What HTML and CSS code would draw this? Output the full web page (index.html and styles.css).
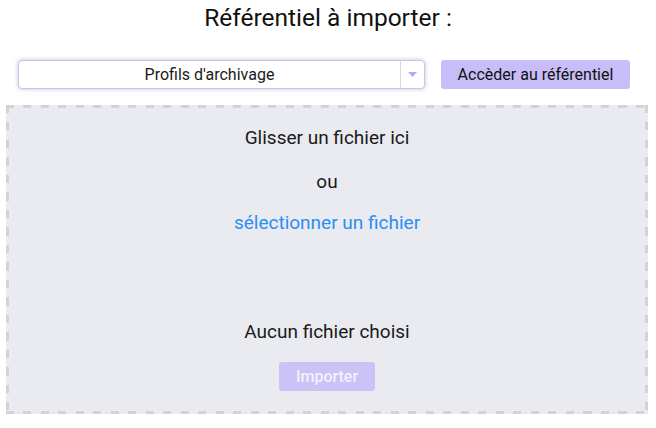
FILE: index.html
```html
<!DOCTYPE html>
<html lang="fr">
<head>
<meta charset="utf-8">
<title>Import</title>
<link rel="stylesheet" href="styles.css">
</head>
<body>
<div class="page">
  <h1 class="title">Référentiel à importer :</h1>
  <div class="toolbar">
    <div class="select">
      <span class="select-value">Profils d'archivage</span>
      <span class="select-arrow"><svg width="9" height="5" viewBox="0 0 9 5"><polygon points="0,0 9,0 4.5,5" fill="#b5aaf2"/></svg></span>
    </div>
    <button class="btn btn-access">Accèder au référentiel</button>
  </div>
  <div class="dropzone">
    <p class="dz-line dz-drag">Glisser un fichier ici</p>
    <p class="dz-line dz-or">ou</p>
    <p class="dz-line dz-pick">sélectionner un fichier</p>
    <p class="dz-line dz-none">Aucun fichier choisi</p>
    <button class="btn btn-import">Importer</button>
  </div>
</div>
</body>
</html>
```
FILE: styles.css
```css
html, body {
  margin: 0;
  padding: 0;
  background: #ffffff;
}
body {
  font-family: Roboto, "Liberation Sans", sans-serif;
  color: #1a1a1a;
}
.page {
  width: 656px;
}
.title {
  margin: 0;
  height: 36px;
  line-height: 36px;
  font-size: 24.5px;
  font-weight: 400;
  text-align: center;
  color: #111;
}
.toolbar {
  display: flex;
  align-items: center;
  margin-top: 24px;
  padding-left: 18px;
  gap: 16px;
}
.select {
  box-sizing: border-box;
  width: 407px;
  height: 29px;
  display: flex;
  background: #fff;
  border: 1px solid #c9c9cf;
  border-radius: 4px;
  box-shadow: 0 0 4px rgba(150, 130, 245, 0.55);
}
.select-value {
  flex: 1;
  text-align: center;
  line-height: 27px;
  font-size: 16px;
  color: #1a1a1a;
}
.select-arrow {
  width: 23px;
  border-left: 1px solid #d8d8dc;
  display: flex;
  align-items: center;
  justify-content: center;
}
.btn {
  font-family: Roboto, "Liberation Sans", sans-serif;
  border: none;
  border-radius: 3px;
  padding: 0;
  cursor: pointer;
}
.btn-access {
  width: 189px;
  height: 29px;
  background: #c7bdf8;
  color: #111;
  font-size: 16px;
}
.dropzone {
  box-sizing: border-box;
  margin: 16px 0 0 6px;
  width: 642px;
  height: 309px;
  padding: 3px;
  background:
    repeating-linear-gradient(90deg, #d3d3d5 0 8px, transparent 8px 17.5px) left top / 100% 3px no-repeat,
    repeating-linear-gradient(90deg, #d3d3d5 0 8px, transparent 8px 17.5px) left bottom / 100% 3px no-repeat,
    repeating-linear-gradient(180deg, #d3d3d5 0 8px, transparent 8px 17.5px) left top / 3px 100% no-repeat,
    repeating-linear-gradient(180deg, #d3d3d5 0 8px, transparent 8px 17.5px) right top / 3px 100% no-repeat,
    #e9ebf0;
  display: flex;
  flex-direction: column;
  align-items: center;
}
.dz-line {
  margin: 0;
  height: 24px;
  line-height: 24px;
  font-size: 19px;
  color: #1a1a1a;
}
.dz-drag { margin-top: 18px; }
.dz-or { margin-top: 20px; }
.dz-pick { margin-top: 17px; color: #2b8ef5; }
.dz-none { margin-top: 85px; }
.btn-import {
  margin-top: 18px;
  width: 96px;
  height: 29px;
  background: #cbc3f6;
  color: #f3f1fd;
  font-size: 16px;
  font-weight: 500;
}
```
